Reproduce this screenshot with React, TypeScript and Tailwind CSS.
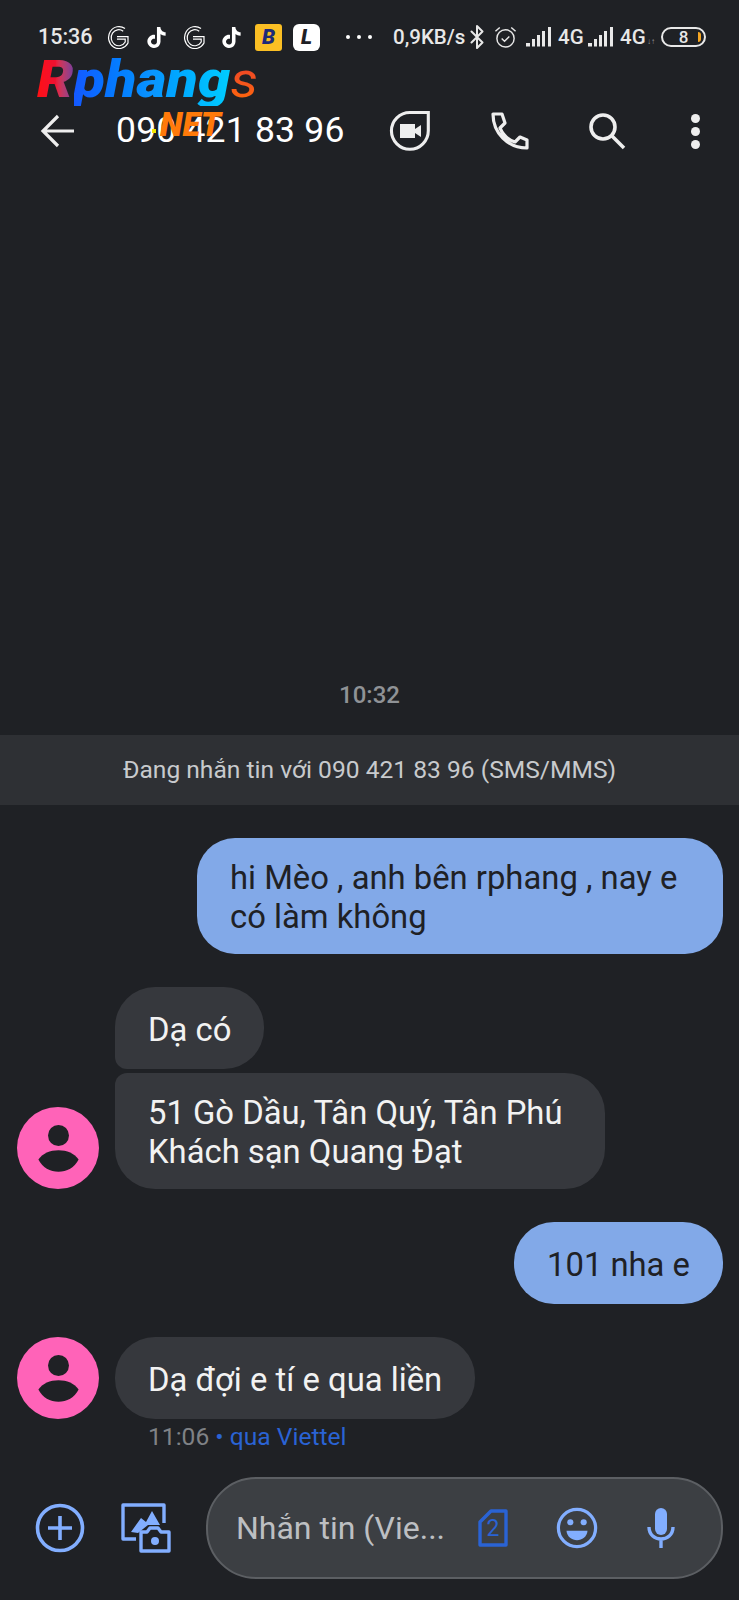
import { SiTiktok } from "react-icons/si";
import { FiBluetooth } from "react-icons/fi";

const ROBOTO = "font-['Roboto',sans-serif]";

const GoogleG = () => (
  <svg className="shrink-0" width="22" height="24" viewBox="0 0 22 24" fill="none" stroke="#fff" strokeWidth="1.2">
    <path d="M18 3.6A10.4 11 0 1 0 21 18V11.6H10" />
    <path d="M16.2 6.2A7.6 8 0 1 0 18.2 17V14.2H10" />
  </svg>
);

const Tiktok = ({ className }: { className: string }) => <SiTiktok className={`text-white text-[21px] shrink-0 ${className}`} />;

const Signal = ({ className }: { className: string }) => (
  <svg className={`shrink-0 ${className}`} width="27" height="20" viewBox="0 0 27 20" fill="#e8e8e8">
    <rect x="0" y="16" width="4" height="3.5" />
    <rect x="6" y="12" width="3" height="7.5" />
    <rect x="11" y="8" width="3" height="11.5" />
    <rect x="16" y="4" width="3" height="15.5" />
    <rect x="22" y="0" width="3" height="19.5" />
  </svg>
);

const StatusBar = () => (
  <div className={`h-[74px] flex items-center pl-[38px] text-[#e8e8e8] font-medium whitespace-nowrap ${ROBOTO}`}>
    <span className="text-[21.5px] w-[69px] shrink-0">15:36</span>
    <GoogleG />
    <Tiktok className="ml-[17px]" />
    <span className="ml-[16px]"><GoogleG /></span>
    <Tiktok className="ml-[16px]" />
    <div className="ml-[13px] w-[27px] h-[27px] shrink-0 rounded-[3px] bg-[#fbbf24] flex items-center justify-center">
      <span className="text-[#1e2a78] font-black italic text-[21px] leading-none">B</span>
    </div>
    <div className="ml-[11px] w-[27px] h-[27px] shrink-0 rounded-[6px] bg-white flex items-center justify-center">
      <span className="text-[#1f2125] font-black italic text-[21px] leading-none">L</span>
    </div>
    <div className="ml-[26px] flex gap-[7px] shrink-0">
      <span className="w-[4px] h-[4px] rounded-full bg-white" />
      <span className="w-[4px] h-[4px] rounded-full bg-white" />
      <span className="w-[4px] h-[4px] rounded-full bg-white" />
    </div>
    <span className="ml-[21px] text-[20.5px] w-[71px] shrink-0">0,9KB/s</span>
    <FiBluetooth className="text-[24px] ml-[1px] shrink-0" />
    <svg className="ml-[5px] shrink-0" width="23" height="24" viewBox="0 0 24 24" fill="none" stroke="#e8e8e8" strokeWidth="1.5">
      <circle cx="12" cy="13.5" r="9" />
      <path d="M8 13.5l3 3 5-5" />
      <path d="M1.5 6L6 2M22.5 6L18 2" />
    </svg>
    <Signal className="ml-[9px]" />
    <span className="ml-[5px] text-[20.5px] w-[24px] shrink-0">4G</span>
    <Signal className="ml-[6px]" />
    <span className="ml-[5px] text-[20.5px] w-[24px] shrink-0">4G</span>
    <span className="ml-[3px] w-[8px] mt-[10px] text-[8px] text-[#9a9a9a] leading-none shrink-0">↓↑</span>
    <div className="ml-[6px] w-[45px] h-[20px] shrink-0 rounded-full border-2 border-[#e8e8e8] relative flex items-center justify-center">
      <span className="text-[17px] leading-none">8</span>
      <span className="absolute right-[3px] top-[3px] w-[3px] h-[10px] rounded-r-full bg-[#f5a623]" />
    </div>
  </div>
);

const Logo = () => (
  <div className={`absolute left-[37px] top-[54px] w-[225px] h-[90px] ${ROBOTO} italic leading-none`}>
    <div className="flex items-baseline origin-left scale-x-[1.11]">
      <span className="text-[52px] font-black text-transparent bg-clip-text bg-gradient-to-r from-[#ff1010] via-[#f01030] to-[#7a3a9a]">R</span>
      <span className="text-[52px] font-black text-transparent bg-clip-text bg-gradient-to-r from-[#1458ff] via-[#0a94ff] to-[#00ccff]">phang</span>
      <span className="text-[50px] font-normal text-transparent bg-clip-text bg-gradient-to-b from-[#e8382a] to-[#ff6a00]">s</span>
    </div>
    <span className="absolute left-[123px] top-[54px] text-[33px] font-black text-[#ff7a0a]">NET</span>
    <span className="absolute left-[115px] top-[75px] w-[4px] h-[4px] bg-[#f5e800]" />
  </div>
);

const Header = () => (
  <div className="h-[114px] flex items-center pl-[40px] text-[#eeeeee] whitespace-nowrap">
    <svg className="shrink-0" width="36" height="36" viewBox="0 0 36 36" fill="none" stroke="#eeeeee" strokeWidth="3.2">
      <path d="M34 18H4M18 3L3 18l15 15" />
    </svg>
    <span className={`ml-[40px] w-[228px] shrink-0 text-[35.5px] text-white tracking-[0.2px] ${ROBOTO}`}>090 421 83 96</span>
    <svg className="ml-[45px] shrink-0" width="42" height="42" viewBox="0 0 42 42" fill="none">
      <path d="M21 2H40V21A19 19 0 1 1 21 2Z" stroke="#eeeeee" strokeWidth="3.2" transform="translate(0.5 0.5) scale(0.97)" />
      <path d="M11 14H26V19L32 15V27L26 23V28H11Z" fill="#eeeeee" />
    </svg>
    <svg className="ml-[60px] shrink-0" width="38" height="38" viewBox="0 0 38 38" fill="none" stroke="#eeeeee" strokeWidth="3.2" strokeLinejoin="round">
      <path d="M2 2H11L14 11L9 16C12 23 17 28 24 30L29 25L36 28V36C17 36 2 21 2 2Z" />
    </svg>
    <svg className="ml-[59px] shrink-0" width="38" height="38" viewBox="0 0 38 38" fill="none" stroke="#eeeeee" strokeWidth="3.6">
      <circle cx="15" cy="15" r="12" />
      <path d="M24 24L36 36" />
    </svg>
    <div className="ml-[65px] flex flex-col gap-[4px]">
      <span className="w-[9px] h-[9px] rounded-full bg-[#eeeeee]" />
      <span className="w-[9px] h-[9px] rounded-full bg-[#eeeeee]" />
      <span className="w-[9px] h-[9px] rounded-full bg-[#eeeeee]" />
    </div>
  </div>
);

const Avatar = () => (
  <div className="w-[82px] h-[82px] rounded-full bg-[#ff63b8] flex flex-col items-center justify-center shrink-0">
    <span className="w-[21px] h-[21px] rounded-full bg-[#1f2125]" />
    <svg className="mt-[4px]" width="41" height="22" viewBox="0 0 42 23" fill="#1f2125">
      <path d="M0 10C8 -3 34 -3 42 10C34 27 8 27 0 10Z" />
    </svg>
  </div>
);

const Outgoing = ({ children, className }: { children: React.ReactNode; className: string }) => (
  <div className="flex justify-end pr-[16px]">
    <div className={`bg-[#82a9e8] text-[#1f2125] text-[32.8px] leading-[39px] px-[33px] pt-[21px] pb-[17px] min-h-[82px] flex items-center ${className}`}>
      <p>{children}</p>
    </div>
  </div>
);

const Incoming = ({ children, className }: { children: React.ReactNode; className: string }) => (
  <div className={`bg-[#36383d] text-[#f2f2f2] text-[32.8px] leading-[39px] pl-[33px] pt-[21px] pb-[17px] min-h-[82px] flex items-center w-fit whitespace-nowrap ${className}`}>
    <p>{children}</p>
  </div>
);

const Composer = () => (
  <div className="mt-auto mb-[21px] flex items-center pl-[35px] pr-[16px]">
    <svg className="shrink-0" width="50" height="50" viewBox="0 0 50 50" fill="none" stroke="#82aeff" strokeWidth="3.6">
      <circle cx="25" cy="25" r="22.5" />
      <path d="M25 13V37M13 25H37" />
    </svg>
    <svg className="ml-[36px] shrink-0" width="50" height="50" viewBox="0 0 50 50" fill="none" stroke="#82aeff" strokeWidth="3.4" strokeLinejoin="round">
      <path d="M15 36H2V2H43V20" />
      <path d="M10 29L20 15L25 19L31 8L39 22H27L17 30Z" fill="#82aeff" stroke="none" />
      <path d="M20 29H26L29 25H37L40 29H48V48H20Z" fill="#1f2125" />
      <circle cx="34" cy="38" r="4" fill="#82aeff" stroke="none" />
    </svg>
    <div className="ml-[35px] h-[102px] w-[517px] shrink-0 rounded-[50px] border-2 border-[#5c5f63] bg-[#3c3f43] flex items-center pl-[28px] whitespace-nowrap">
      <span className="text-[32px] text-[#bdbfc2] w-[211px] shrink-0">Nhắn tin (Vie...</span>
      <div className="ml-[31px] relative w-[30px] h-[38px] shrink-0 flex items-center justify-center">
        <svg className="absolute inset-0" width="30" height="38" viewBox="0 0 30 38" fill="none" stroke="#2a63d4" strokeWidth="3.4" strokeLinejoin="round">
          <path d="M13 2H28V36H2V13Z" />
        </svg>
        <span className="relative text-[23px] leading-none text-[#2a63d4]">2</span>
      </div>
      <svg className="ml-[48px] shrink-0" width="42" height="42" viewBox="0 0 44 44" fill="none" stroke="#82aeff" strokeWidth="3.4">
        <circle cx="22" cy="22" r="19.5" />
        <circle cx="15" cy="16" r="3.2" fill="#82aeff" stroke="none" />
        <circle cx="29" cy="16" r="3.2" fill="#82aeff" stroke="none" />
        <path d="M11 25H33C32 38 12 38 11 25Z" fill="#82aeff" stroke="none" />
      </svg>
      <svg className="ml-[49px] shrink-0" width="28" height="40" viewBox="0 0 28 40" fill="none" stroke="#82aeff" strokeWidth="3.4">
        <rect x="8" y="0" width="12" height="27" rx="6" fill="#82aeff" stroke="none" />
        <path d="M2 19C2 35 26 35 26 19M14 31V40" />
      </svg>
    </div>
  </div>
);

export default function App() {
  return (
    <div className={`relative w-[739px] h-[1600px] overflow-hidden bg-[#1f2125] flex flex-col ${ROBOTO}`}>
      <StatusBar />
      <Header />
      <Logo />

      {/* conversation */}
      <div className="mt-[493px] text-center text-[24px] leading-[28px] text-[#8f9296] font-medium">10:32</div>
      <div className="mt-[26px] h-[70px] bg-[#2e3034] flex items-center justify-center text-[24.6px] text-[#c8cacd]">
        Đang nhắn tin với 090 421 83 96 (SMS/MMS)
      </div>

      <div className="mt-[33px]">
        <Outgoing className="w-[526px] h-[116px] rounded-[38px]">
          hi Mèo , anh bên rphang , nay e có làm không
        </Outgoing>
      </div>

      <div className="mt-[33px] flex items-end pl-[17px] gap-[16px]">
        <Avatar />
        <div className="flex flex-col gap-[4px]">
          <Incoming className="pr-[33px] rounded-[40px] rounded-bl-[12px]">Dạ có</Incoming>
          <Incoming className="pr-[42px] rounded-[40px] rounded-tl-[12px]">
            51 Gò Dầu, Tân Quý, Tân Phú
            <br />
            Khách sạn Quang Đạt
          </Incoming>
        </div>
      </div>

      <div className="mt-[33px]">
        <Outgoing className="rounded-[40px]">101 nha e</Outgoing>
      </div>

      <div className="mt-[33px] flex items-end pl-[17px] gap-[16px]">
        <Avatar />
        <Incoming className="pr-[33px] rounded-[40px]">Dạ đợi e tí e qua liền</Incoming>
      </div>
      <div className="mt-[3px] ml-[148px] text-[24.6px] leading-[30px] text-[#7f8286]">
        11:06 <span className="text-[#2a63d4]">• qua Viettel</span>
      </div>

      <Composer />
    </div>
  );
}
